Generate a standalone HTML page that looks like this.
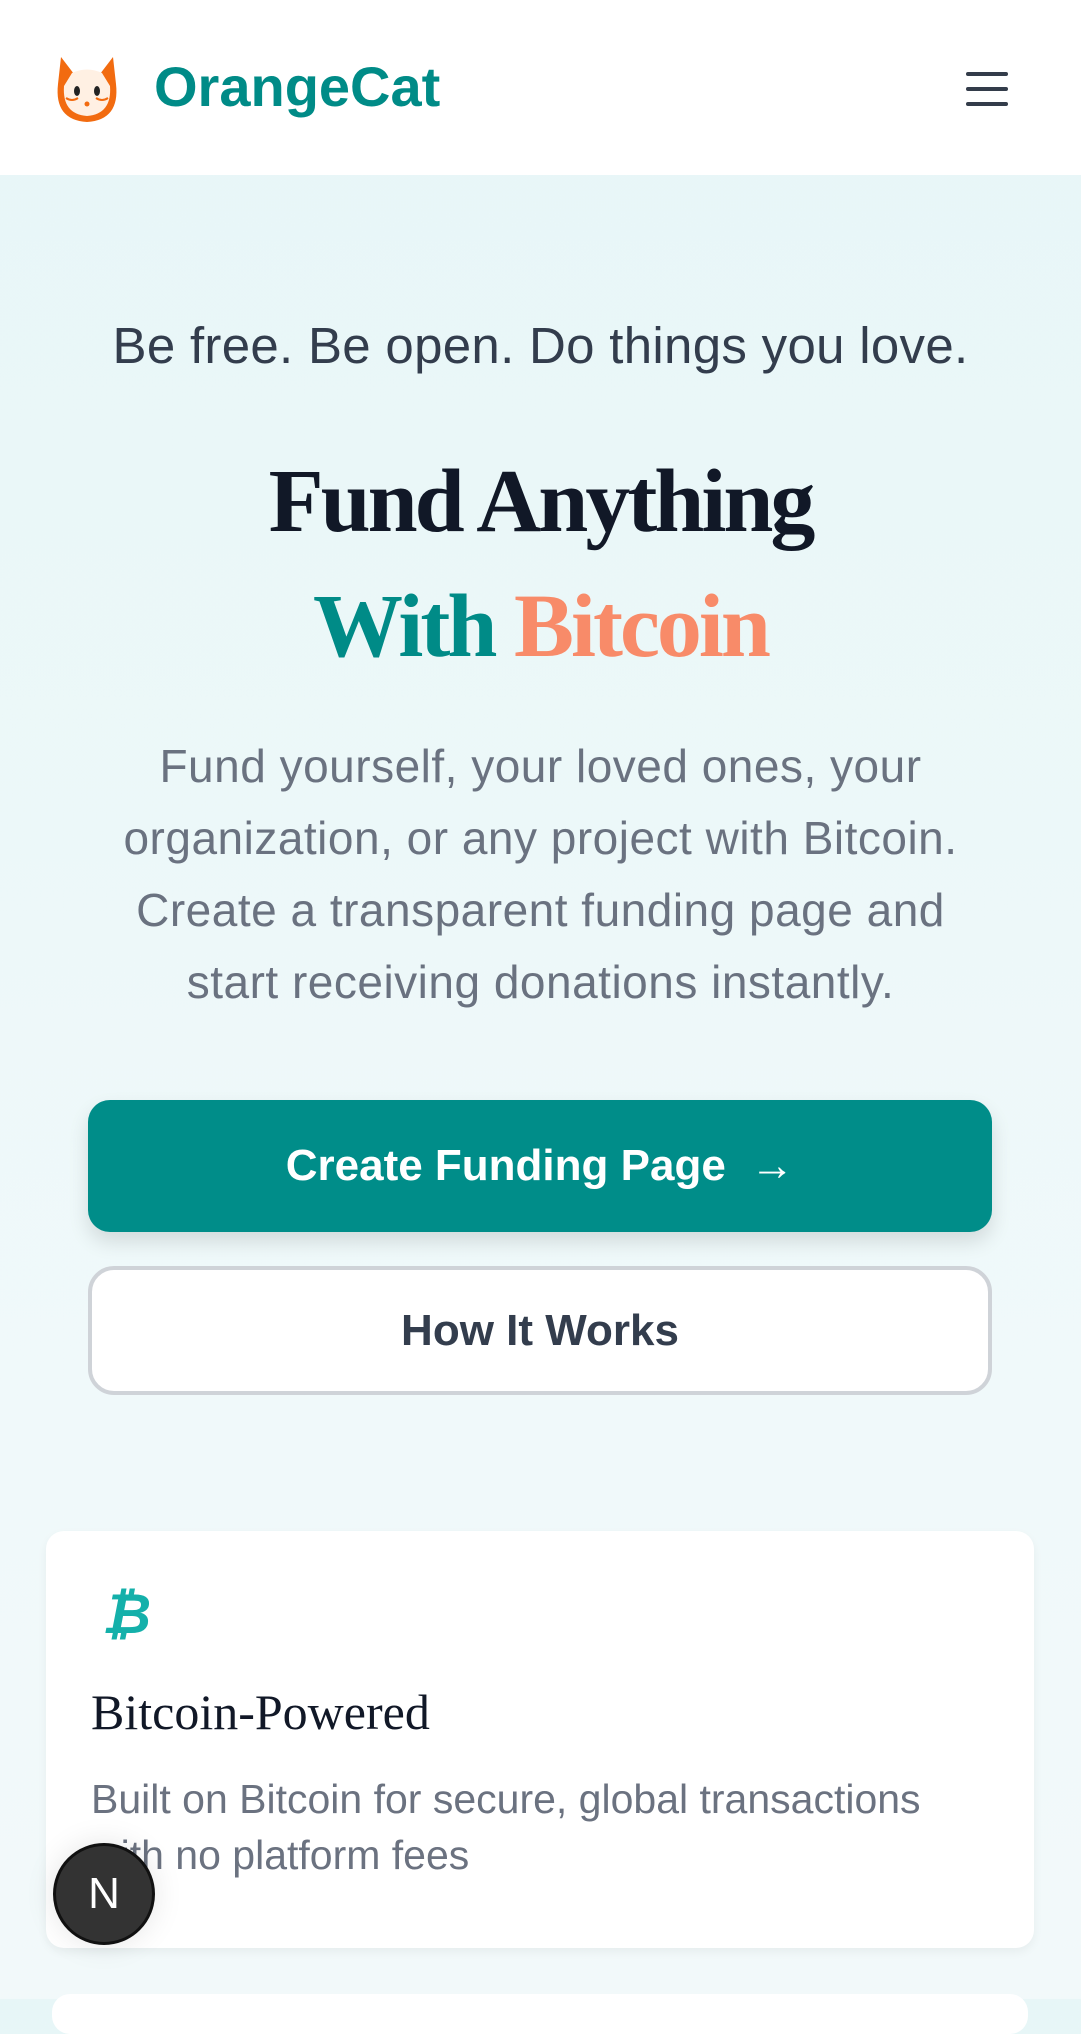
<!DOCTYPE html>
<html><head><meta charset="utf-8"><style>
*{margin:0;padding:0;box-sizing:border-box}
body{width:1081px;height:1999px;overflow:hidden;font-family:"Liberation Sans",sans-serif;background:linear-gradient(#e7f6f7,#f0f9fa 1400px,#f2f9fa);position:relative}
header{height:175px;background:#fff;position:relative}
.logo{position:absolute;left:52px;top:54px}
.brand{position:absolute;left:154px;top:54px;font-size:56px;font-weight:bold;color:#008b87}
.menu{position:absolute;left:966px;top:72px;width:42px}
.menu div{height:4px;background:#333c4a;border-radius:2px;margin-bottom:11px}
.c{position:absolute;left:0;width:1081px;text-align:center}
.tag{top:316px;font-size:51px;color:#333d4d;letter-spacing:.3px}
.h{font-family:"Liberation Serif",serif;font-weight:bold;font-size:90px;letter-spacing:-3px}
.p{top:730px;font-size:46px;line-height:72px;color:#6a7280;letter-spacing:.5px}
.b1{position:absolute;left:88px;top:1100px;width:904px;height:132px;background:#008d89;border-radius:22px;color:#fff;font-size:44px;font-weight:bold;text-align:center;line-height:132px;box-shadow:0 10px 20px rgba(0,0,0,.12)}
.b2{position:absolute;left:88px;top:1266px;width:904px;height:129px;background:#fff;border:4px solid #cfd3d8;border-radius:26px;color:#333d4d;font-size:44px;font-weight:bold;text-align:center;line-height:121px}
.card{position:absolute;left:46px;top:1531px;width:988px;height:417px;background:#fff;border-radius:18px;box-shadow:0 4px 10px rgba(0,0,0,.05)}
.card2{position:absolute;left:52px;top:1994px;width:976px;height:40px;background:#fff;border-radius:18px}
.ct{position:absolute;left:45px;top:152px;font-family:"Liberation Serif",serif;font-size:50px;color:#111827}
.cd{position:absolute;left:45px;top:240px;width:880px;font-size:41px;line-height:56px;color:#6b7280}
.badge{position:absolute;left:53px;top:1843px;width:102px;height:102px;border-radius:50%;background:#333;border:3px solid #111;color:#fff;font-size:44px;text-align:center;line-height:96px;box-shadow:0 0 30px rgba(0,0,0,.1)}
</style></head><body>
<header>
<svg class="logo" width="70" height="70" viewBox="0 0 70 70"><path d="M9 3 L22 20 L48 20 L61 3 L64 30 Q68 66 35 68 Q2 66 6 30 Z" fill="#f26b10"/><path d="M20 19 Q35 12 50 19 L58 32 Q60 60 35 62 Q10 60 12 32 Z" fill="#fff0e3"/><ellipse cx="25" cy="37" rx="3" ry="5" fill="#222"/><ellipse cx="45" cy="37" rx="3" ry="5" fill="#222"/><circle cx="35" cy="50" r="2.5" fill="#f26b10"/><path d="M14 44 Q20 48 26 44 M44 44 Q50 48 56 44" stroke="#f26b10" stroke-width="2" fill="none"/></svg>
<div class="brand">OrangeCat</div>
<div class="menu"><div></div><div></div><div></div></div>
</header>
<div class="c tag">Be free. Be open. Do things you love.</div>
<div class="c h" style="top:450px;color:#111827">Fund Anything</div>
<div class="c h" style="top:575px"><span style="color:#008b87">With</span> <span style="color:#f88b69">Bitcoin</span></div>
<div class="c p">Fund yourself, your loved ones, your<br>organization, or any project with Bitcoin.<br>Create a transparent funding page and<br>start receiving donations instantly.</div>
<div class="b1">Create Funding Page &nbsp;→</div>
<div class="b2">How It Works</div>
<div class="card">
<div style="position:absolute;left:56px;top:50px;font-size:56px;color:#14b0aa;font-style:italic;font-weight:bold">₿</div>
<div class="ct">Bitcoin-Powered</div>
<div class="cd">Built on Bitcoin for secure, global transactions with no platform fees</div>
</div>
<div class="card2"></div>
<div class="badge">N</div>
</body></html>
